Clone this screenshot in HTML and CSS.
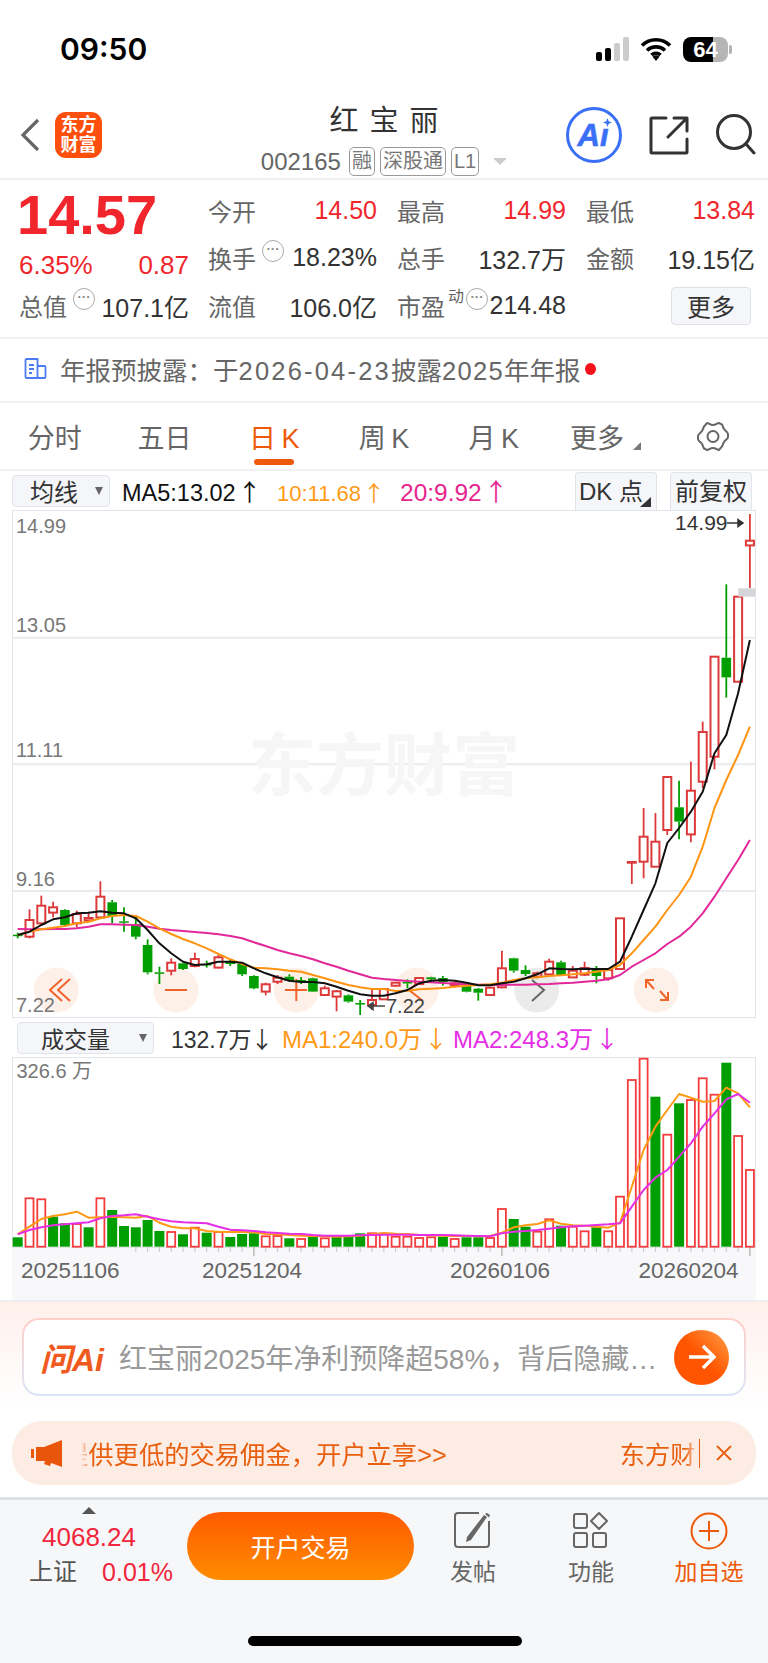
FILE: index.html
```html
<!DOCTYPE html>
<html lang="zh-CN">
<head>
    <meta charset="UTF-8">
    <meta name="viewport" content="width=device-width, initial-scale=1.0">
    <title>红宝丽 002165</title>
    <link rel="stylesheet" href="styles.css">
</head>
<body>
    <div class="status-bar">
        <span class="clock">09:50</span>
        <div class="status-icons">
            <div class="signal">
                <i class="sig-1"></i><i class="sig-2"></i><i class="sig-3"></i><i class="sig-4"></i>
            </div>
            <svg class="wifi" width="32" height="24" viewBox="0 0 32 24">
                <path d="M2 8.5a20 20 0 0 1 28 0M7 13.5a13 13 0 0 1 18 0M11.5 18a6.500 6.500 0 0 1 9 0" fill="none" stroke="#000" stroke-width="3.600"/>
                <path d="M16 24l-3.500-4.200a5 5 0 0 1 7 0z" fill="#000"/>
            </svg>
            <div class="battery"><span>64</span></div>
            <i class="battery-nub"></i>
        </div>
    </div>

    <header class="nav">
        <div class="nav-left">
            <svg width="20" height="34" viewBox="0 0 20 34">
                <path d="M18 2L3 17l15 15" fill="none" stroke="#666" stroke-width="3.200"/>
            </svg>
            <div class="logo">东方<br>财富</div>
        </div>
        <div class="nav-title">
            <h1>红 宝 丽</h1>
            <div class="nav-sub">
                <span class="code">002165</span>
                <span class="tag">融</span>
                <span class="tag">深股通</span>
                <span class="tag">L1</span>
                <i class="sub-caret"></i>
            </div>
        </div>
        <div class="nav-right">
            <div class="ai-badge">
                <span>Ai</span>
                <svg class="ai-star" width="11" height="11" viewBox="0 0 10 10"><path d="M5 0l1.300 3.700L10 5 6.300 6.300 5 10 3.700 6.300 0 5l3.700-1.300z" fill="#3a6ff7"/></svg>
            </div>
            <svg width="40" height="40" viewBox="0 0 40 40" fill="none" stroke="#333" stroke-width="3" stroke-linecap="round" stroke-linejoin="round">
                <path d="M17 3H3a1 1 0 0 0-1 1v33a1 1 0 0 0 1 1h34a1 1 0 0 0 1-1V24"/>
                <path d="M19 22L38 3M25 3h13v13"/>
            </svg>
            <svg width="40" height="42" viewBox="0 0 40 42" fill="none" stroke="#333" stroke-width="3" stroke-linecap="round">
                <circle cx="18" cy="18" r="16.500"/>
                <path d="M30 30l8 9"/>
            </svg>
        </div>
    </header>

    <section class="quote">
        <div class="quote-left">
            <div class="price">14.57</div>
            <div class="change"><span>6.35%</span><span>0.87</span></div>
            <div class="stat">
                <span class="label">总值</span>
                <i class="dots">···</i>
                <span class="value">107.1亿</span>
            </div>
        </div>
        <div class="quote-grid">
            <div class="stat"><span class="label">今开</span><span class="value up">14.50</span></div>
            <div class="stat"><span class="label">最高</span><span class="value up">14.99</span></div>
            <div class="stat"><span class="label">最低</span><span class="value up">13.84</span></div>
            <div class="stat"><span class="label">换手</span><i class="dots">···</i><span class="value">18.23%</span></div>
            <div class="stat"><span class="label">总手</span><span class="value">132.7万</span></div>
            <div class="stat"><span class="label">金额</span><span class="value">19.15亿</span></div>
            <div class="stat"><span class="label">流值</span><span class="value">106.0亿</span></div>
            <div class="stat"><span class="label">市盈</span><sup class="dyn">动</sup><i class="dots">···</i><span class="value">214.48</span></div>
            <div class="more-cell"><button class="more-btn">更多</button></div>
        </div>
    </section>

    <section class="notice">
        <svg width="23" height="22" viewBox="0 0 23 22" fill="none" stroke="#4d7bf3" stroke-width="1.800">
            <path d="M1.500 2a1 1 0 0 1 1-1h11v19h-11a1 1 0 0 1-1-1zM13.500 8h7a1 1 0 0 1 1 1v10a1 1 0 0 1-1 1h-7"/>
            <path d="M5 7h5M5 11h5M5 15h3"/>
        </svg>
        <span class="notice-text">年报预披露：于<span class="date">2026-04-23</span>披露<span class="year">2025</span>年年报</span>
        <i class="red-dot"></i>
    </section>

    <nav class="tabs">
        <a class="tab">分时</a>
        <a class="tab">五日</a>
        <a class="tab active">日 K</a>
        <a class="tab">周 K</a>
        <a class="tab">月 K</a>
        <a class="tab tab-more">更多<i class="tab-caret"></i></a>
        <a class="tab">
            <svg width="34" height="31" viewBox="0 0 34 31" fill="none" stroke="#666" stroke-width="2">
                <path d="M11 2c2 0 3 2 6 2s4-2 6-2l3 1.500c1 2 1 3 2 4.500s4 3 4 5v3c0 2-3 3.500-4 5s-1 2.500-2 4.500L23 29c-2 0-3-2-6-2s-4 2-6 2l-3-1.500c-1-2-1-3-2-4.500s-4-3-4-5v-3c0-2 3-3.500 4-5s1-2.500 2-4.500z"/>
                <circle cx="17" cy="15.500" r="5.500"/>
            </svg>
        </a>
    </nav>

    <div class="ma-row">
        <div class="select select-ma">均线<i class="select-caret"></i></div>
        <span class="ma ma-black">MA5:13.02<i class="arr">↑</i></span>
        <span class="ma ma-orange">10:11.68<i class="arr">↑</i></span>
        <span class="ma ma-pink">20:9.92<i class="arr">↑</i></span>
        <div class="ma-btns">
            <div class="corner-btn dk">DK 点</div>
            <div class="corner-btn">前复权</div>
        </div>
    </div>

    <svg id="kline" class="chart kline" width="744" height="508" viewBox="12 510 744 508"></svg>

    <div class="vol-row">
        <div class="select select-vol">成交量<i class="select-caret"></i></div>
        <span class="vol-now">132.7万<i class="arr">↓</i></span>
        <span class="vol-ma1">MA1:240.0万<i class="arr">↓</i></span>
        <span class="vol-ma2">MA2:248.3万<i class="arr">↓</i></span>
    </div>

    <svg id="volume" class="chart volume" width="744" height="243" viewBox="12 1057 744 243"></svg>

    <section class="ask">
        <div class="ask-box">
            <span class="ask-logo">问Ai</span>
            <span class="ask-text">红宝丽2025年净利预降超58%，背后隐藏…</span>
            <div class="ask-go">
                <svg width="28" height="26" viewBox="0 0 28 26" fill="none" stroke="#fff" stroke-width="3.400">
                    <path d="M1 13h25M15 2l11 11-11 11"/>
                </svg>
            </div>
        </div>
        <div class="banner">
            <svg width="31" height="27" viewBox="0 0 31 27" fill="#e8560c">
                <path d="M0 9h3v9H0zM5 7h8L31 0v27l-11-4-1 3-6-2 1-3H5z"/>
            </svg>
            <div class="marquee">
                <span class="msg-a">提供更低的交易佣金，开户立享&gt;&gt;</span>
                <span class="msg-b">东方财富</span>
            </div>
            <i class="banner-sep"></i>
            <svg class="banner-x" width="16" height="16" viewBox="0 0 16 16" fill="none" stroke="#e8600f" stroke-width="1.800">
                <path d="M1 1l14 14M15 1L1 15"/>
            </svg>
        </div>
    </section>

    <footer class="bottom">
        <div class="bottom-main">
            <div class="index">
                <div class="index-top">
                    <i class="index-caret"></i>
                    <span class="index-num">4068.24</span>
                </div>
                <div class="index-row"><span>上证</span><span class="up">0.01%</span></div>
            </div>
            <button class="trade-btn">开户交易</button>
            <div class="tool">
                <svg width="38" height="36" viewBox="0 0 38 36" fill="none" stroke="#666" stroke-width="2">
                    <path d="M25 1H4a3 3 0 0 0-3 3v28a3 3 0 0 0 3 3h28a3 3 0 0 0 3-3V9"/>
                    <path d="M13 25L30 3l3 2-16 23-5 2z" fill="#666" stroke="none"/>
                    <path d="M31 2l2-1 3 2-1 2.500z" fill="#666" stroke="none"/>
                </svg>
                <span>发帖</span>
            </div>
            <div class="tool">
                <svg width="36" height="36" viewBox="0 0 36 36" fill="none" stroke="#666" stroke-width="2">
                    <rect x="1" y="2" width="13" height="14" rx="2"/>
                    <rect x="1" y="21" width="13" height="14" rx="2"/>
                    <rect x="20" y="21" width="13" height="14" rx="2"/>
                    <path d="M26 1l8 8-8 8-8-8z" stroke-linejoin="round"/>
                </svg>
                <span>功能</span>
            </div>
            <div class="tool tool-add">
                <svg width="38" height="38" viewBox="0 0 38 38" fill="none" stroke="#ee5a0a" stroke-width="2">
                    <circle cx="19" cy="19" r="17.500"/>
                    <path d="M19 9v20M9 19h20"/>
                </svg>
                <span>加自选</span>
            </div>
        </div>
        <div class="home-bar"></div>
    </footer>

    <script src="chart.js"></script>
</body>
</html>
```

FILE: styles.css
```css
* {
    box-sizing: border-box;
}

html, body {
    margin: 0;
    padding: 0;
}

body {
    width: 768px;
    height: 1663px;
    overflow: hidden;
    background-color: #fff;
    color: #333;
    font-family: "Liberation Sans", "Noto Sans CJK SC", sans-serif;
}

i {
    font-style: normal;
}

button {
    font-family: inherit;
}

.up {
    color: #f0262c;
}

/* status bar */
.status-bar {
    display: flex;
    align-items: center;
    justify-content: space-between;
    height: 100px;
    padding: 0 36px 2px 60px;
}

.clock {
    font-family: Inter, sans-serif;
    font-size: 30px;
    font-weight: 600;
    color: #000;
}

.status-icons {
    display: flex;
    align-items: center;
}

.signal {
    display: flex;
    align-items: flex-end;
    gap: 2.500px;
    height: 24px;
    margin-right: 11px;
}

.signal i {
    width: 6.500px;
    border-radius: 2px;
    background-color: #000;
}

.sig-1 { height: 9px; }
.sig-2 { height: 13px; }
.sig-3 { height: 18px; background-color: #ccc !important; }
.sig-4 { height: 24px; background-color: #ccc !important; }

.wifi {
    margin-right: 11px;
}

.battery {
    width: 45px;
    height: 25px;
    border-radius: 8px;
    background: linear-gradient(90deg, #000 66%, #b5b5b5 66%);
    color: #fff;
    font-size: 22px;
    font-weight: 700;
    line-height: 25px;
    text-align: center;
}

.battery-nub {
    width: 3px;
    height: 9px;
    margin-left: 1px;
    border-radius: 0 2px 2px 0;
    background-color: #b5b5b5;
}

/* nav */
.nav {
    display: grid;
    grid-template-columns: 1fr auto 1fr;
    height: 80px;
    border-bottom: 2px solid #efefef;
}

.nav-left {
    display: flex;
    align-items: center;
    height: 70px;
    padding-left: 20px;
    gap: 15px;
}

.logo {
    width: 47px;
    height: 46px;
    border-radius: 11px;
    background-color: #ff4f0d;
    color: #fff;
    font-size: 18px;
    font-weight: 700;
    line-height: 20px;
    text-align: center;
    padding-top: 3px;
}

.nav-title {
    padding-top: 2px;
    text-align: center;
}

.nav-title h1 {
    margin: 0;
    font-size: 29px;
    font-weight: 400;
    line-height: 38px;
    word-spacing: 3px;
    color: #333;
}

.nav-sub {
    display: flex;
    align-items: center;
    justify-content: center;
    margin-top: 7px;
    height: 29px;
    gap: 5px;
}

.code {
    margin-right: 3px;
    font-size: 24px;
    color: #666;
}

.tag {
    padding: 0 2px;
    border: 1px solid #999;
    border-radius: 5px;
    color: #777;
    font-size: 20px;
    line-height: 27px;
}

.sub-caret {
    width: 0;
    height: 0;
    margin-left: 9px;
    border-left: 7px solid transparent;
    border-right: 7px solid transparent;
    border-top: 7px solid #ccc;
}

.nav-right {
    display: flex;
    align-items: center;
    justify-content: flex-end;
    height: 70px;
    padding-right: 12px;
    gap: 27px;
}

.ai-badge {
    position: relative;
    width: 56px;
    height: 56px;
    padding-right: 2px;
    border: 3px solid #3a6ff7;
    border-radius: 50%;
    color: #3a6ff7;
    font-size: 31px;
    font-style: italic;
    font-weight: 700;
    line-height: 52px;
    text-align: center;
    -webkit-text-stroke: 0.6px #3a6ff7;
}

.ai-star {
    position: absolute;
    top: 7px;
    right: 6px;
    padding: 1px;
    border-radius: 50%;
    background-color: #fff;
}

/* quote */
.quote {
    display: flex;
    height: 159px;
    padding-left: 19px;
    padding-right: 13px;
    border-bottom: 2px solid #f1f1f1;
}

.quote-left {
    width: 170px;
    margin-right: 19px;
}

.price {
    height: 64px;
    padding-top: 7px;
    margin-left: -2px;
    color: #f0262c;
    font-size: 56px;
    font-weight: 700;
    line-height: 56px;
}

.change {
    display: flex;
    justify-content: space-between;
    height: 38px;
    padding-top: 4px;
    color: #f0262c;
    font-size: 26px;
    line-height: 34px;
}

.quote-grid {
    display: grid;
    flex: 1;
    grid-template-columns: repeat(3, 1fr);
    grid-template-rows: 47px 48px 47px;
    column-gap: 20px;
    padding-top: 7px;
}

.stat {
    display: flex;
    align-items: center;
    height: 47px;
    white-space: nowrap;
}

.label {
    color: #666;
    font-size: 24px;
}

.value {
    margin-left: auto;
    color: #333;
    font-size: 25px;
}

.value.up {
    color: #f0262c;
}

.dots {
    width: 22px;
    height: 22px;
    margin-left: 6px;
    margin-bottom: 14px;
    border: 1.500px solid #aaa;
    border-radius: 50%;
    color: #888;
    font-size: 13px;
    font-weight: 700;
    line-height: 15px;
    text-align: center;
}

.dyn {
    margin: 0 2px 18px 3px;
    color: #666;
    font-size: 16px;
    line-height: 16px;
}

.dyn + .dots {
    margin-left: 0;
}

.more-cell {
    display: flex;
    align-items: center;
    justify-content: flex-end;
    padding-right: 4px;
}

.more-btn {
    width: 80px;
    height: 38px;
    padding: 0;
    border: 1px solid #dfe1e6;
    border-radius: 4px;
    background-color: #f5f6f9;
    color: #333;
    font-size: 24px;
}

/* notice */
.notice {
    display: flex;
    align-items: center;
    height: 64px;
    padding-left: 24px;
    padding-bottom: 3px;
    border-bottom: 2px solid #f1f1f1;
}

.notice-text {
    margin-left: 13px;
    color: #666;
    font-size: 25.500px;
    white-space: nowrap;
}

.date {
    letter-spacing: 2.200px;
}

.year {
    letter-spacing: 1.300px;
}

.red-dot {
    width: 11px;
    height: 12px;
    margin-left: 5px;
    border-radius: 50%;
    background-color: #f5111a;
}

/* tabs */
.tabs {
    display: grid;
    grid-template-columns: repeat(7, 1fr);
    height: 68px;
    border-bottom: 2px solid #f1f1f1;
}

.tab {
    position: relative;
    display: flex;
    align-items: center;
    justify-content: center;
    color: #666;
    font-size: 27px;
    word-spacing: -2px;
}

.tab-more {
    padding-left: 4px;
}

.tab.active {
    color: #ee5a0a;
}

.tab.active::after {
    content: "";
    position: absolute;
    left: 50%;
    bottom: 4px;
    width: 40px;
    height: 6px;
    margin-left: -20px;
    border-radius: 3px;
    background-color: #ee5a0a;
}

.tab-caret {
    align-self: flex-end;
    width: 0;
    height: 0;
    margin: 0 0 19px 9px;
    border-left: 8px solid transparent;
    border-bottom: 8px solid #777;
}

/* MA row */
.ma-row {
    display: flex;
    height: 39px;
    align-items: center;
    padding-left: 12px;
    font-size: 23px;
}

.select {
    position: relative;
    display: flex;
    align-items: center;
    height: 32px;
    border: 1px solid #e1e4ea;
    border-radius: 4px;
    background-color: #f5f6f9;
    color: #333;
    font-size: 24px;
}

.select-ma {
    width: 98px;
    padding-left: 17px;
}

.select-caret {
    position: absolute;
    right: 6px;
    width: 0;
    height: 0;
    border-left: 4.500px solid transparent;
    border-right: 4.500px solid transparent;
    border-top: 8px solid #666;
}

.arr {
    margin-left: 2px;
    font-family: "Noto Sans CJK SC", sans-serif;
}

.ma {
    white-space: nowrap;
}

.ma-black {
    width: 155px;
    margin-left: 12px;
    color: #111;
    font-size: 23.500px;
}

.ma-orange {
    width: 123px;
    color: #ff9a17;
    font-size: 22px;
}

.ma-pink {
    color: #e6258f;
    font-size: 24.500px;
}

.ma-btns {
    display: flex;
    margin-left: auto;
    margin-right: 16px;
    gap: 13px;
    align-self: flex-end;
}

.corner-btn {
    position: relative;
    width: 82px;
    height: 38px;
    border: 1px solid #e1e4ea;
    border-bottom: none;
    border-radius: 4px 4px 0 0;
    background-color: #f5f6f9;
    color: #333;
    font-size: 24px;
    line-height: 38px;
    text-align: center;
    white-space: nowrap;
}

.corner-btn.dk {
    padding-right: 10px;
}

.corner-btn.dk::after {
    content: "";
    position: absolute;
    right: 5px;
    bottom: 3px;
    border-left: 11px solid transparent;
    border-bottom: 10px solid #333;
}

/* charts */
.chart {
    display: block;
    margin-left: 12px;
    overflow: hidden;
}

.chart text {
    font-family: "Liberation Sans", "Noto Sans CJK SC", sans-serif;
}

.vol-row {
    display: flex;
    align-items: center;
    height: 39px;
    padding-left: 17px;
    font-size: 23px;
    white-space: nowrap;
}

.select-vol {
    width: 137px;
    padding-left: 23px;
    font-size: 23px;
}

.vol-now {
    width: 111px;
    margin-left: 17px;
    color: #333;
}

.vol-now .arr {
    margin-left: -1px;
}

.vol-ma1 {
    width: 171px;
    color: #ff9a17;
    font-size: 24px;
}

.vol-ma2 {
    color: #e52fe6;
    font-size: 24px;
}

/* ask box and banner */
.ask {
    height: 197px;
    padding-top: 16px;
    border-top: 2px solid #ededed;
    background: linear-gradient(#fff0ec, #fff 105px);
}

.ask-box {
    display: flex;
    align-items: center;
    height: 78px;
    margin: 0 22px;
    padding: 0 15px 0 16px;
    border: 2px solid transparent;
    border-radius: 17px;
    background: linear-gradient(#fff, #fff) padding-box, linear-gradient(#ffd0c8, #dce6f8) border-box;
}

.ask-logo {
    width: 79px;
    color: #f05a1e;
    font-size: 32px;
    font-style: italic;
    font-weight: 700;
    white-space: nowrap;
}

.ask-text {
    flex: 1;
    color: #999;
    font-size: 28px;
    white-space: nowrap;
}

.ask-go {
    display: flex;
    align-items: center;
    justify-content: center;
    width: 55px;
    height: 55px;
    border-radius: 50%;
    background: linear-gradient(45deg, #ff5500 50%, #ffa04a);
}

.banner {
    display: flex;
    align-items: center;
    height: 64px;
    margin: 25px 12px 0;
    padding-left: 19px;
    border-radius: 30px;
    background-color: #fdece4;
}

.marquee {
    display: flex;
    width: 618px;
    margin-left: 19px;
    overflow: hidden;
    color: #e8600f;
    font-size: 25.300px;
    white-space: nowrap;
    -webkit-mask-image: linear-gradient(90deg, transparent 0, #000 10px, #000 604px, transparent 618px);
    mask-image: linear-gradient(90deg, transparent 0, #000 10px, #000 604px, transparent 618px);
}

.msg-a {
    flex: none;
    margin-left: -18px;
}

.msg-b {
    flex: none;
    margin-left: 173px;
}

.banner-sep {
    width: 1px;
    height: 29px;
    background-color: #e8600f;
}

.banner-x {
    margin-left: 16px;
}

/* bottom bar */
.bottom {
    height: 166px;
    border-top: 3px solid #dde0e6;
    background-color: #f6f7f9;
}

.bottom-main {
    display: flex;
    height: 88px;
}

.index {
    flex: none;
    width: 187px;
    padding-left: 29px;
}

.index-top {
    display: flex;
    flex-direction: column;
    align-items: center;
    width: 120px;
    height: 54px;
    padding-top: 7px;
}

.index-caret {
    width: 0;
    height: 0;
    border-left: 7px solid transparent;
    border-right: 7px solid transparent;
    border-bottom: 7px solid #555;
}

.index-num {
    margin-top: 8px;
    color: #f0263c;
    font-size: 26px;
    line-height: 30px;
}

.index-row {
    display: flex;
    justify-content: space-between;
    width: 144px;
    font-size: 24px;
    line-height: 36px;
    color: #555;
}

.index-row .up {
    color: #f0263c;
    font-size: 25px;
}

.trade-btn {
    flex: none;
    width: 227px;
    height: 68px;
    margin-top: 12px;
    padding: 0;
    border: none;
    border-radius: 34px;
    background: linear-gradient(#ff5a00, #ff8c00);
    color: #fff;
    font-size: 25px;
}

.tool {
    display: flex;
    flex-direction: column;
    align-items: center;
    width: 118px;
    padding-top: 12px;
    color: #666;
    font-size: 23px;
}

.tool span {
    margin-top: 8px;
    line-height: 32px;
    white-space: nowrap;
}

.tool-add {
    color: #ee5a0a;
}

.tool-add span {
    margin-top: 6px;
}

.home-bar {
    width: 274px;
    height: 10px;
    margin: 48px 0 0 248px;
    border-radius: 5px;
    background-color: #000;
}
```

FILE: chart.js
```js
// y values are measured as 3 * (pixel - base), so the numbers stay whole
var STEP = 11.81;
var FIRST = 17.7;

function px(i) {
    return FIRST + i * STEP;
}

function ky(v) {
    return 840 + v / 3;
}

function vy(v) {
    return 1030 + v / 3;
}

// kind, body top, body bottom, high, low
var candles = [
    ['g',284,286,278,295], ['r',240,290,208,295], ['r',197,250,167,255], ['r',202,218,185,232],
    ['g',210,255,208,258], ['r',222,250,212,262], ['r',234,241,215,245], ['r',170,232,124,235],
    ['g',187,228,180,250], ['g',244,248,202,275], ['g',252,290,225,298], ['g',315,397,298,403],
    ['g',397,400,380,432], ['r',368,392,355,406], ['g',370,387,368,390], ['r',357,378,338,382],
    ['g',372,375,362,383], ['r',352,383,345,385], ['g',363,372,360,378], ['g',372,403,366,408],
    ['g',408,445,406,448], ['r',433,455,428,466], ['r',413,425,405,432], ['g',410,422,403,426],
    ['g',420,423,411,432], ['g',415,455,413,456], ['r',445,465,437,468], ['r',454,470,450,514],
    ['g',466,485,463,488], ['g',489,491,480,525], ['r',480,495,450,510], ['r',447,478,445,480],
    ['r',428,437,426,439], ['g',426,430,418,445], ['r',414,432,412,435], ['g',412,418,410,428],
    ['g',414,426,408,437], ['r',430,435,425,442], ['g',438,455,436,457], ['g',446,458,444,482],
    ['r',443,465,440,468], ['r',385,442,332,445], ['g',355,392,353,398], ['g',390,402,376,408],
    ['r',400,410,395,415], ['r',365,403,356,406], ['g',367,405,362,408], ['r',392,412,378,414],
    ['r',384,404,365,408], ['g',385,408,378,430], ['r',390,415,385,422], ['r',235,387,235,390],
    ['r',66,68,66,132], ['r',-10,65,-96,115], ['r',5,80,-81,80], ['r',-189,-30,-189,-15],
    ['g',-98,-55,-178,-2], ['r',-148,-17,-235,7], ['r',-324,-175,-355,-156], ['r',-550,-250,-550,-212],
    ['g',-547,-488,-767,-427], ['r',-730,-475,-730,-475], ['r',-898,-884,-978,-756]
];

var maBlack = [285,275,255,238,232,220,218,214,218,220,235,270,310,340,365,375,373,365,365,368,385,400,412,422,426,426,430,440,452,463,467,467,
    460,450,430,422,420,422,428,436,436,430,425,415,403,385,387,388,386,387,387,365,290,210,130,9,-36,-85,-145,-260,-315,-440,-600];
var maOrange = [285,275,268,263,258,250,245,235,228,225,228,245,265,282,297,310,325,342,358,372,383,385,388,392,395,405,415,425,435,442,447,447,
    453,452,448,446,444,440,437,435,433,428,420,415,412,408,406,403,400,395,390,375,340,300,260,210,165,110,20,-96,-180,-255,-340];
var maPink = [267,268,268,267,267,265,260,253,253,254,255,260,266,270,273,276,279,283,288,295,307,318,330,340,348,358,370,380,392,403,413,417,
    420,423,425,427,429,431,433,434,434,435,434,434,433,432,430,428,425,422,418,405,380,360,340,312,290,260,220,170,115,60,0];

var volumes = [
    ['g',622],['r',505],['r',508],['g',560],['g',580],['r',582],['g',592],['r',505],['g',540],['g',588],
    ['g',592],['g',570],['g',603],['r',606],['g',613],['r',593],['g',608],['r',606],['g',621],['g',612],
    ['g',610],['r',619],['r',618],['g',625],['r',627],['g',620],['r',625],['g',615],['g',620],['g',610],
    ['r',610],['r',612],['r',620],['r',620],['r',624],['r',622],['g',620],['r',627],['g',622],['g',622],
    ['r',624],['r',537],['g',567],['g',590],['r',605],['r',568],['g',587],['r',590],['r',604],['g',592],
    ['r',604],['r',500],['r',150],['r',86],['g',200],['r',314],['g',220],['r',210],['r',145],['r',194],
    ['g',98],['r',318],['r',420]
];

var volOrange = [613,590,567,558,553,545,563,562,560,562,563,558,578,590,595,595,603,605,606,606,607,612,613,615,617,618,619,620,619,617,613,609,
    611,612,615,616,617,618,618,619,618,608,592,586,582,571,581,586,587,590,593,578,470,360,290,240,192,203,215,213,173,190,232];
var volPink = [613,600,592,586,583,580,577,565,558,556,553,560,568,574,577,578,580,590,599,601,603,607,609,611,612,615,617,617,617,616,615,614,
    614,614,615,615,615,616,617,618,619,610,605,603,600,596,592,589,587,585,583,580,530,480,443,420,380,340,290,250,208,192,218];

function line(x1, y1, x2, y2, color, w) {
    return '<line x1="' + x1 + '" y1="' + y1 + '" x2="' + x2 + '" y2="' + y2 + '" stroke="' + color + '" stroke-width="' + w + '"/>';
}

function poly(values, toY, color, w) {
    var pts = values.map(function (v, i) {
        return px(i).toFixed(1) + ',' + toY(v).toFixed(1);
    }).join(' ');
    return '<polyline points="' + pts + '" fill="none" stroke="' + color + '" stroke-width="' + w + '" stroke-linejoin="round"/>';
}

function label(x, y, text, size, color, anchor) {
    return '<text x="' + x + '" y="' + y + '" font-size="' + size + '" fill="' + color + '"' +
        (anchor ? ' text-anchor="' + anchor + '"' : '') + '>' + text + '</text>';
}

function circleBtn(x, color) {
    return '<circle cx="' + x + '" cy="990" r="22.500" fill="' + color + '"/>';
}

function icon(d, color) {
    return '<path d="' + d + '" fill="none" stroke="' + color + '" stroke-width="2"/>';
}

function drawKline() {
    var s = '';
    var frame = '#e2e4e9';
    var grid = '#e9ebf0';

    [637.7, 764.3, 891].forEach(function (y) {
        s += line(12, y, 756, y, grid, 2);
    });

    s += '<text x="384" y="790" font-size="68" font-weight="700" fill="#f6f6f7" text-anchor="middle">东方财富</text>';

    var peach = '#fdf0e9';
    var orange = '#f0642a';
    s += circleBtn(56.3, peach) + circleBtn(176, peach) + circleBtn(296.3, peach) + circleBtn(416.3, peach) + circleBtn(656.3, peach);
    s += circleBtn(536.7, '#ebebeb');
    s += icon('M62 979L50 990l12 11M70 979L58 990l12 11', orange);
    s += icon('M165 990h22', orange);
    s += icon('M285 990h22M296.300 979v22', orange);
    s += icon('M423 979L409 990l14 11', orange);
    s += icon('M532 980l12 10-12 11', '#666');
    s += icon('M646 980l8 9M646 988v-8h8M668 1000l-8-9M668 992v8h-8', orange);

    candles.forEach(function (c, i) {
        var x = px(i);
        var color = c[0] === 'r' ? '#dc3a3a' : '#009e00';
        if (c[3] < c[1]) s += line(x, ky(c[3]), x, ky(c[1]), color, 1.8);
        if (c[4] > c[2]) s += line(x, ky(c[2]), x, ky(c[4]), color, 1.8);
        if (c[0] === 'r') {
            s += '<rect x="' + (x - 4).toFixed(1) + '" y="' + ky(c[1]).toFixed(1) + '" width="8" height="' + ((c[2] - c[1]) / 3).toFixed(1) +
                '" fill="#fff" stroke="' + color + '" stroke-width="2"/>';
        } else {
            s += '<rect x="' + (x - 4.8).toFixed(1) + '" y="' + ky(c[1]).toFixed(1) + '" width="9.600" height="' + Math.max((c[2] - c[1]) / 3, 1.5).toFixed(1) +
                '" fill="' + color + '"/>';
        }
    });

    s += '<rect x="738.300" y="588.300" width="17.400" height="8.400" fill="#d4d6da"/>';

    s += poly(maPink, ky, '#e2289a', 2);
    s += poly(maOrange, ky, '#ff9412', 2);
    s += poly(maBlack, ky, '#111', 2);

    s += label(16, 533, '14.99', 20, '#777');
    s += label(16, 632, '13.05', 20, '#777');
    s += label(16, 757, '11.11', 20, '#777');
    s += label(16, 886, '9.16', 20, '#777');
    s += label(16, 1012, '7.22', 20, '#777');

    s += label(675, 530, '14.99', 21, '#333');
    s += '<path d="M727 523h15M738 519.500l5 3.500-5 3.500z" fill="#333" stroke="#333" stroke-width="1.500"/>';
    s += label(386, 1013, '7.22', 20, '#444');
    s += '<path d="M385 1006h-16M373 1002.500l-5 3.500 5 3.500z" fill="#444" stroke="#444" stroke-width="1.500"/>';

    s += '<rect x="12.500" y="510.500" width="743" height="507" fill="none" stroke="' + frame + '"/>';
    document.getElementById('kline').innerHTML = s;
}

function drawVolume() {
    var s = '';
    var frame = '#e2e4e9';

    s += '<rect x="12" y="1247" width="744" height="53" fill="#f8f8fb"/>';
    s += '<rect x="12.500" y="1057.500" width="743" height="190" fill="#fff" stroke="' + frame + '"/>';

    for (var t = 10; t < volumes.length; t++) {
        var major = t === 20 || t === 41 || t === 62;
        s += line(px(t), 1247, px(t), major ? 1256 : 1252, major ? '#aaa' : '#ccc', 1.2);
    }

    volumes.forEach(function (b, i) {
        var x = px(i);
        var top = vy(b[1]);
        var h = 1246.7 - top;
        if (b[0] === 'r') {
            s += '<rect x="' + (x - 4).toFixed(1) + '" y="' + top.toFixed(1) + '" width="8" height="' + h.toFixed(1) + '" fill="#fff" stroke="#f53c3c" stroke-width="1.800"/>';
        } else {
            s += '<rect x="' + (x - 5).toFixed(1) + '" y="' + top.toFixed(1) + '" width="10" height="' + h.toFixed(1) + '" fill="#009e00"/>';
        }
    });

    s += poly(volOrange, vy, '#ff9a14', 2);
    s += poly(volPink, vy, '#e52fe6', 2);

    s += label(16.5, 1078, '326.6 万', 20, '#777');
    s += label(21, 1278, '20251106', 22.5, '#666');
    s += label(202, 1278, '20251204', 22.5, '#666');
    s += label(450, 1278, '20260106', 22.5, '#666');
    s += label(638.5, 1278, '20260204', 22.5, '#666');

    document.getElementById('volume').innerHTML = s;
}

drawKline();
drawVolume();
```
